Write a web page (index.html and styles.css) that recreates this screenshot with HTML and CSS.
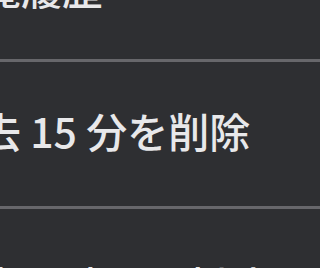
FILE: index.html
```html
<!DOCTYPE html>
<html lang="ja">
<head>
<meta charset="utf-8">
<link rel="stylesheet" href="styles.css">
</head>
<body>
<ul class="menu">
  <li class="item item-first"><span class="label">閲覧履歴</span></li>
  <li class="item"><span class="label">過去 15 分を削除</span></li>
  <li class="item item-last"><span class="label">過去 1 時間を削除</span></li>
</ul>
</body>
</html>
```

FILE: styles.css
```css
html, body {
  margin: 0;
  padding: 0;
  background: #2e2f32;
  overflow: hidden;
}
.menu {
  list-style: none;
  margin: -85px 0 0 -61px;
  padding: 0;
  width: 400px;
}
.item {
  box-sizing: content-box;
  height: 136px;
  padding-bottom: 8px;
  border-bottom: 3px solid #67676b;
  display: flex;
  align-items: center;
  font-family: "Noto Sans CJK JP", "Noto Sans", sans-serif;
  font-size: 41px;
  font-weight: 500;
  line-height: 1;
  color: #e8e8ea;
  white-space: nowrap;
}
.item-first {
  height: 143px;
  padding-top: 1px;
  padding-bottom: 0;
}
.item-last {
  height: 138px;
  padding-top: 6px;
  padding-bottom: 0;
}
```
